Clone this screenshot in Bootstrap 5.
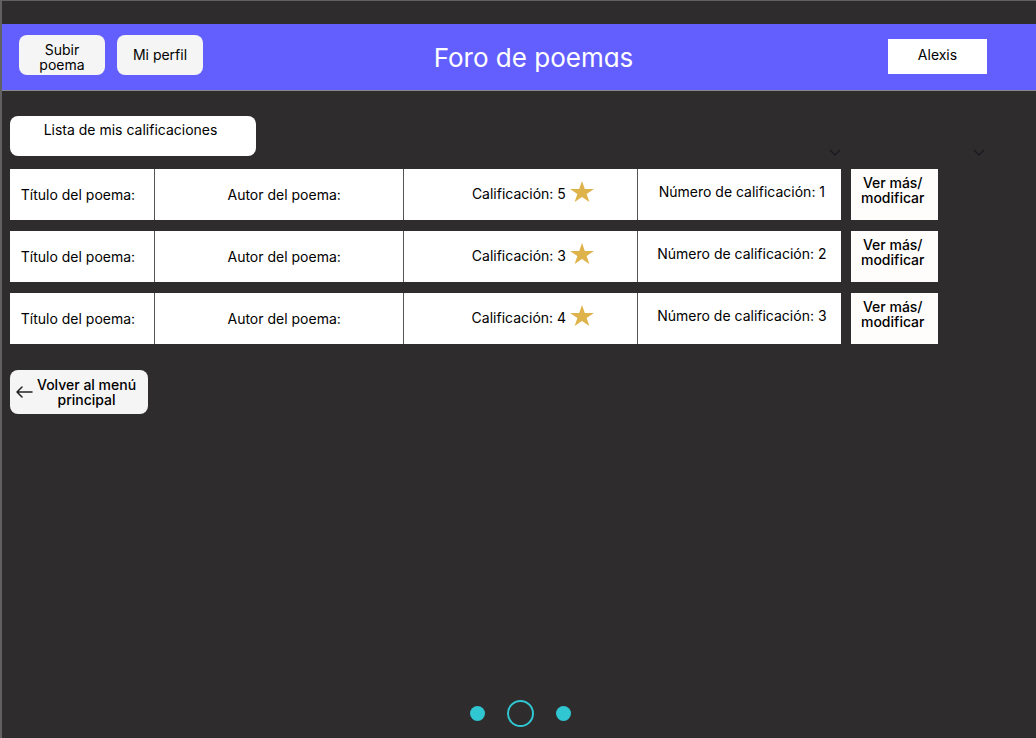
<!DOCTYPE html>
<html lang="es">
<head>
<meta charset="utf-8">
<meta name="viewport" content="width=device-width, initial-scale=1">
<title>Foro de poemas</title>
<link href="https://cdn.jsdelivr.net/npm/bootstrap@5.3.0/dist/css/bootstrap.min.css" rel="stylesheet">
<style>
  body { background: #2e2c2d; color: #000; font-family: Inter, sans-serif; font-size: 14px; line-height: 15px; }
  .page-frame { border-left: 2px solid #616161; border-top: 1px solid #616161; padding-top: 23px; }
  .top-bar { background: #635fff; border-bottom: 1px solid #8a8a8a; height: 67px; padding: 11px 49px 15px 17px; }
  .side-zone { flex: 1 1 0; }
  .forum-title { color: #fff; font-size: 26px; font-weight: 400; line-height: 32px; font-feature-settings: "cv11"; margin: 7px 0 0 61px; }
  .btn { --bs-btn-font-size: 14px; --bs-btn-line-height: 15px; --bs-btn-border-width: 0; --bs-btn-padding-x: 0; --bs-btn-padding-y: 0; --bs-btn-color: #000; --bs-btn-bg: #f5f5f5; --bs-btn-hover-bg: #e6e6e6; }
  .btn-soft { width: 86px; height: 40px; padding-bottom: 2px; --bs-btn-border-radius: 8px; }
  .btn-two-line { padding: 4px 0 0; }
  .btn-user { width: 99px; height: 35px; padding-bottom: 4px; --bs-btn-bg: #fff; --bs-btn-border-radius: 0; }
  .content { padding: 25px 98px 0 8px; }
  .list-heading { background: #fff; border-radius: 8px; width: 246px; height: 40px; padding: 6px 5px 0 0; font-size: 14px; line-height: 15px; font-weight: 400; }
  .sorters { gap: 132px; margin-right: -47px; }
  .ratings { table-layout: fixed; border-collapse: separate; border-spacing: 0 11px; margin: 2px 0 15px; }
  .ratings td { height: 51px; padding: 0; background: #fff; vertical-align: middle; }
  .ratings td + td { border-left: 1px solid #555; }
  .ratings .action-cell { background: transparent; border: 0; padding-left: 10px; vertical-align: top; }
  .ratings .author-cell { padding-left: 10px; }
  .ratings .score-cell { padding: 0 0 2px 24px; }
  .ratings .number-cell { padding: 0 0 6px 4px; }
  .btn-more { height: 51px; padding: 6px 4px 0 0; font-weight: 500; --bs-btn-bg: #fffdfc; --bs-btn-border-radius: 0; }
  .btn-back { width: 138px; height: 44px; padding: 0 6px; font-weight: 500; --bs-btn-border-radius: 8px; }
  .pager { gap: 22px; padding-bottom: 11px; padding-left: 3px; }
  .pager-dot { width: 15px; height: 15px; border-radius: 50%; background: #30c7d2; border: 0; padding: 0; }
  .pager-dot.current { width: 27px; height: 27px; background: transparent; border: 2px solid #30c7d2; }
</style>
</head>
<body>
<div class="page-frame min-vh-100 d-flex flex-column">
  <header class="top-bar d-flex align-items-start">
    <nav class="side-zone d-flex gap-2">
      <button type="button" class="btn btn-soft btn-two-line me-1">Subir<br>poema</button>
      <button type="button" class="btn btn-soft">Mi perfil</button>
    </nav>
    <h1 class="forum-title">Foro de poemas</h1>
    <div class="side-zone d-flex justify-content-end pt-1">
      <button type="button" class="btn btn-user">Alexis</button>
    </div>
  </header>

  <main class="content">
    <div class="d-flex align-items-end justify-content-between">
      <h2 class="list-heading text-center m-0">Lista de mis calificaciones</h2>
      <div class="sorters d-flex">
        <svg width="12" height="7" viewBox="0 0 12 7" fill="none" stroke="#1b1a20" stroke-width="1.5" aria-hidden="true"><path d="M1 1l5 5 5-5"/></svg>
        <svg width="12" height="7" viewBox="0 0 12 7" fill="none" stroke="#1b1a20" stroke-width="1.5" aria-hidden="true"><path d="M1 1l5 5 5-5"/></svg>
      </div>
    </div>

    <table class="ratings w-100">
      <colgroup><col style="width:15.5%"><col style="width:26.9%"><col style="width:25.2%"><col style="width:22%"><col style="width:10.4%"></colgroup>
      <tbody>
        <tr>
          <td class="text-center pe-2">Título del poema:</td>
          <td class="text-center author-cell">Autor del poema:</td>
          <td class="score-cell"><div class="d-flex justify-content-center align-items-center">Calificación: 5<svg class="mb-1 ms-1" width="24" height="21" viewBox="0 0 24 22" preserveAspectRatio="none" fill="#dfb34b" aria-hidden="true"><path d="M12 0l2.800 8.400H24l-7.400 5.200L19.400 22 12 16.800 4.600 22l2.800-8.400L0 8.400h9.200z"/></svg></div></td>
          <td class="text-center number-cell">Número de calificación: 1</td>
          <td class="action-cell"><button type="button" class="btn btn-more d-flex justify-content-center w-100">Ver más/<br>modificar</button></td>
        </tr>
        <tr>
          <td class="text-center pe-2">Título del poema:</td>
          <td class="text-center author-cell">Autor del poema:</td>
          <td class="score-cell"><div class="d-flex justify-content-center align-items-center">Calificación: 3<svg class="mb-1 ms-1" width="24" height="21" viewBox="0 0 24 22" preserveAspectRatio="none" fill="#dfb34b" aria-hidden="true"><path d="M12 0l2.800 8.400H24l-7.400 5.200L19.400 22 12 16.800 4.600 22l2.800-8.400L0 8.400h9.200z"/></svg></div></td>
          <td class="text-center number-cell">Número de calificación: 2</td>
          <td class="action-cell"><button type="button" class="btn btn-more d-flex justify-content-center w-100">Ver más/<br>modificar</button></td>
        </tr>
        <tr>
          <td class="text-center pe-2">Título del poema:</td>
          <td class="text-center author-cell">Autor del poema:</td>
          <td class="score-cell"><div class="d-flex justify-content-center align-items-center">Calificación: 4<svg class="mb-1 ms-1" width="24" height="21" viewBox="0 0 24 22" preserveAspectRatio="none" fill="#dfb34b" aria-hidden="true"><path d="M12 0l2.800 8.400H24l-7.400 5.200L19.400 22 12 16.800 4.600 22l2.800-8.400L0 8.400h9.200z"/></svg></div></td>
          <td class="text-center number-cell">Número de calificación: 3</td>
          <td class="action-cell"><button type="button" class="btn btn-more d-flex justify-content-center w-100">Ver más/<br>modificar</button></td>
        </tr>
      </tbody>
    </table>

    <button type="button" class="btn btn-back d-flex align-items-center gap-1">
      <svg class="flex-shrink-0" width="17" height="12" viewBox="0 0 17 12" fill="none" stroke="#222" stroke-width="1.500" stroke-linecap="round" stroke-linejoin="round" aria-hidden="true"><path d="M16 6H1M6 1L1 6l5 5"/></svg>
      <span class="text-nowrap">Volver al menú<br>principal</span>
    </button>
  </main>

  <nav class="pager d-flex justify-content-center align-items-center mt-auto" aria-label="Páginas">
    <button type="button" class="pager-dot" aria-label="Página 1"></button>
    <button type="button" class="pager-dot current" aria-label="Página 2" aria-current="page"></button>
    <button type="button" class="pager-dot" aria-label="Página 3"></button>
  </nav>
</div>
<script src="https://cdn.jsdelivr.net/npm/bootstrap@5.3.0/dist/js/bootstrap.bundle.min.js"></script>
</body>
</html>
